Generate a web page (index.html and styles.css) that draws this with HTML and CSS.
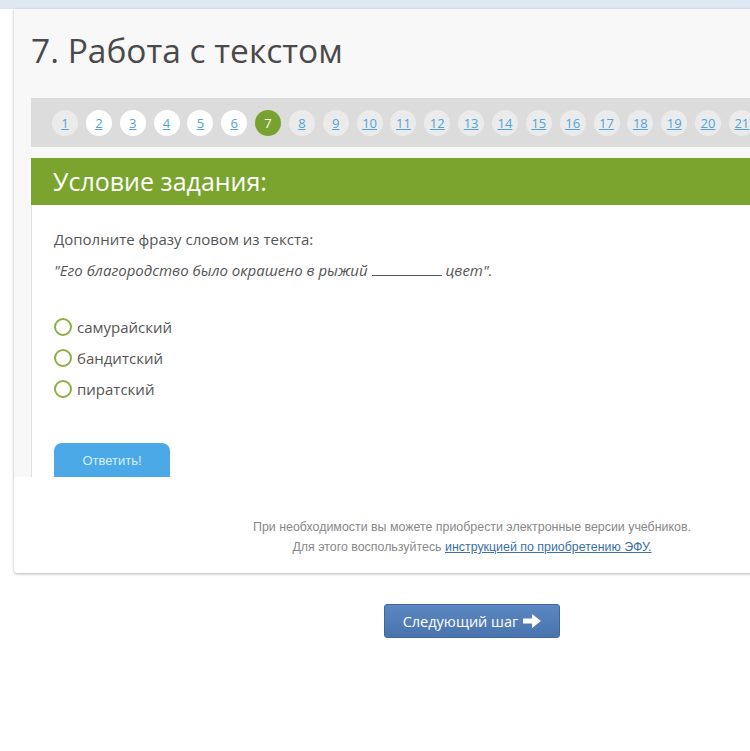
FILE: index.html
```html
<!DOCTYPE html>
<html lang="ru">
<head>
  <meta charset="UTF-8">
  <title>7. Работа с текстом</title>
  <link rel="stylesheet" href="styles.css">
</head>
<body>
  <div class="topbar"></div>
  <div class="page">
    <div class="card">
      <div class="card-top">
        <h1 class="title">7. Работа с текстом</h1>
        <div class="pager">
          <a class="step done" href="#">1</a>
          <a class="step" href="#">2</a>
          <a class="step" href="#">3</a>
          <a class="step" href="#">4</a>
          <a class="step" href="#">5</a>
          <a class="step" href="#">6</a>
          <span class="step current">7</span>
          <a class="step done" href="#">8</a>
          <a class="step done" href="#">9</a>
          <a class="step done" href="#">10</a>
          <a class="step done" href="#">11</a>
          <a class="step done" href="#">12</a>
          <a class="step done" href="#">13</a>
          <a class="step done" href="#">14</a>
          <a class="step done" href="#">15</a>
          <a class="step done" href="#">16</a>
          <a class="step done" href="#">17</a>
          <a class="step done" href="#">18</a>
          <a class="step done" href="#">19</a>
          <a class="step done" href="#">20</a>
          <a class="step done" href="#">21</a>
        </div>
        <div class="task">
          <div class="task-head">Условие задания:</div>
          <div class="task-body">
            <p class="question">Дополните фразу словом из текста:</p>
            <p class="phrase">"Его благородство было окрашено в рыжий <span class="blank"></span> цвет".</p>
            <ul class="options">
              <li><span class="radio"></span>самурайский</li>
              <li><span class="radio"></span>бандитский</li>
              <li><span class="radio"></span>пиратский</li>
            </ul>
            <button class="answer">Ответить!</button>
          </div>
        </div>
      </div>
      <div class="card-footer">
        <p>При необходимости вы можете приобрести электронные версии учебников.</p>
        <p>Для этого воспользуйтесь <a href="#">инструкцией по приобретению ЭФУ.</a></p>
      </div>
    </div>
    <div class="next-row">
      <button class="next">Следующий шаг
        <svg class="arrow" width="18" height="14" viewBox="0 0 18 14"><path d="M0 4.5h9V0l9 7-9 7V9.5H0z" fill="#fff"/></svg>
      </button>
    </div>
  </div>
</body>
</html>
```

FILE: styles.css
```css
body {
  margin: 0;
  padding: 0;
  font-family: "Open Sans", Arial, sans-serif;
  color: #555;
  background: #fff;
  overflow: hidden;
}

.topbar {
  height: 9px;
  background-color: #dfe7f2;
}

.page {
  width: 916px;
  margin-left: 14px;
}

.card {
  background: #fff;
  border-radius: 0 0 3px 3px;
  box-shadow: 0 1px 3px rgba(0, 0, 0, 0.3);
}

.card-top {
  background: #f8f8f8;
  padding-left: 17px;
}

.title {
  margin: 0;
  height: 89px;
  box-sizing: border-box;
  padding-top: 25px;
  font-size: 33.5px;
  font-weight: normal;
  line-height: 1;
  color: #4a4a4a;
}

.pager {
  display: flex;
  align-items: center;
  gap: 7.85px;
  height: 49px;
  padding-left: 21px;
  background: #dcdcdc;
  overflow: hidden;
}

.step {
  flex: none;
  display: flex;
  align-items: center;
  justify-content: center;
  width: 26px;
  height: 26px;
  border-radius: 50%;
  background: #fff;
  font-size: 13px;
  color: #4fa3d9;
  text-decoration: underline;
}

.step.done {
  background: #ebebeb;
}

.step.current {
  background: #77a22f;
  color: #fff;
  text-decoration: none;
}

.task {
  margin-top: 11px;
}

.task-head {
  height: 47px;
  padding-left: 22px;
  background: #7aa42e;
  color: #fff;
  font-size: 25px;
  line-height: 47px;
}

.task-body {
  height: 272px;
  box-sizing: border-box;
  padding: 22px 0 0 22px;
  background: #fff;
  border-left: 1px solid #e0e0e0;
  overflow: hidden;
  font-size: 15px;
}

.question {
  margin: 0;
  line-height: 24px;
}

.phrase {
  margin: 7px 0 0;
  line-height: 24px;
  font-style: italic;
}

.blank {
  display: inline-block;
  width: 70px;
  border-bottom: 1px solid #555;
}

.options {
  list-style: none;
  margin: 29px 0 0;
  padding: 0;
}

.options li {
  display: flex;
  align-items: center;
  height: 31px;
}

.radio {
  width: 14px;
  height: 14px;
  margin-right: 5px;
  border: 2px solid #8fae45;
  border-radius: 50%;
}

.answer {
  margin-top: 39px;
  width: 116px;
  height: 40px;
  padding: 0 0 6px;
  border: none;
  border-radius: 8px;
  background: #4aa9e6;
  color: #d9effc;
  font-family: "Liberation Sans", Arial, sans-serif;
  font-size: 13px;
}

.card-footer {
  height: 96px;
  box-sizing: border-box;
  padding-top: 40px;
  text-align: center;
  font-family: "Liberation Sans", Arial, sans-serif;
  font-size: 12.4px;
  color: #888;
}

.card-footer p {
  margin: 0;
  line-height: 20px;
}

.card-footer a {
  color: #3a70a3;
}

.next-row {
  display: flex;
  justify-content: center;
  padding-top: 31px;
}

.next {
  display: flex;
  align-items: center;
  gap: 5px;
  height: 34px;
  padding: 0 18px;
  border: 1px solid #40679d;
  border-radius: 3px;
  background: linear-gradient(#5b88c2, #4a73ad);
  color: #fff;
  font-family: "Open Sans", Arial, sans-serif;
  font-size: 14.5px;
}
```
